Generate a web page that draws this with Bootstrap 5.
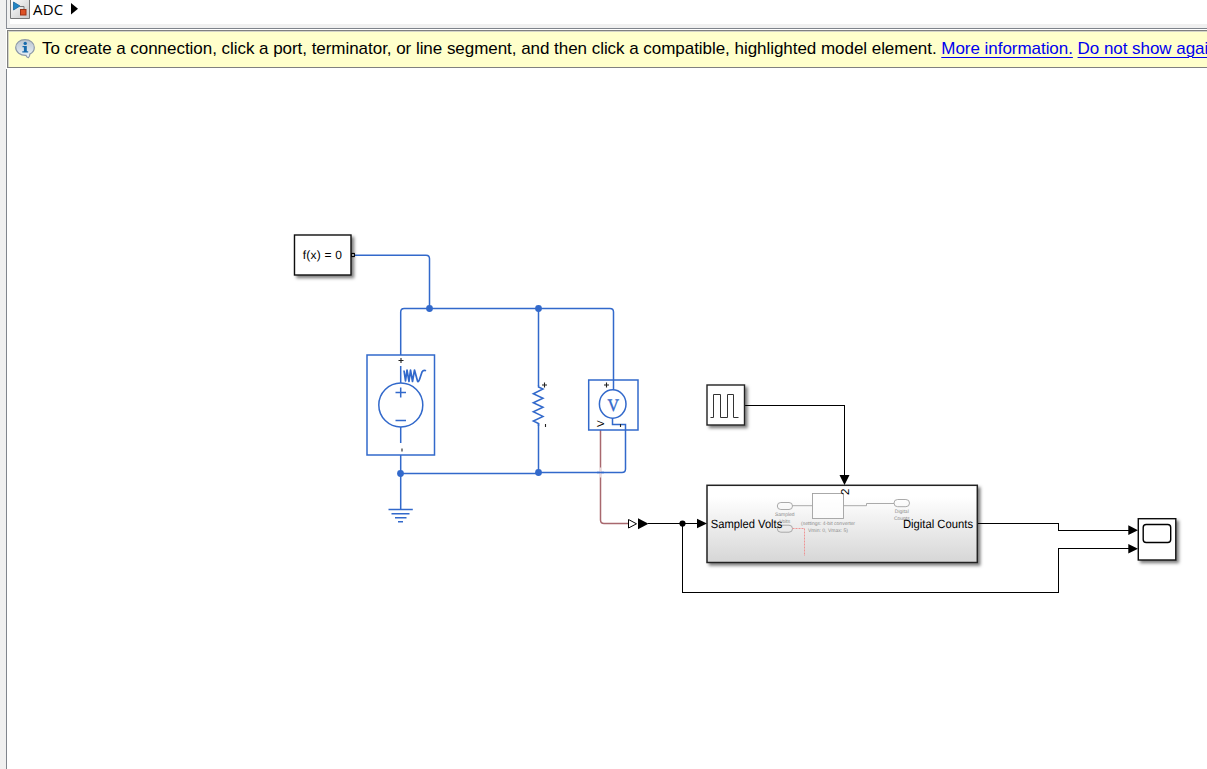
<!DOCTYPE html>
<html lang="en">
<head>
<meta charset="utf-8">
<title>ADC</title>
<meta name="viewport" content="width=device-width, initial-scale=1">
<link href="https://cdn.jsdelivr.net/npm/bootstrap@5.3.0/dist/css/bootstrap.min.css" rel="stylesheet">
<style>
body{background:#fff;font-family:"Liberation Sans",Arial,sans-serif;color:#000}
.gutter{width:6px;background:#f0f0f0}
.crumbs{height:29px;border-left:1px solid #8a8e96;border-bottom:1px solid #7e838b;background:#f0f0f0;padding-left:3px}
.crumbs-in{height:24px;background:#fff;font:15px/18px "Open Sans","Noto Sans",sans-serif}
.crumbs-in span{margin-left:3px;width:31px;letter-spacing:.15px}
.tip{height:38px;margin:1px 0 1px 1px;border:solid #808080;border-width:1px 0 1px 1px;background:#ffffcb;box-shadow:inset 1px 1px #d4d4c8;font-size:17px;letter-spacing:-.041px;line-height:36px;padding-left:7px}
.tip a{color:#00e;text-decoration:underline;text-decoration-thickness:1px;text-underline-offset:3px}
.tip-text{margin-left:7px}
.model{height:700px;border-left:1px solid #80858d}
.model svg text{font-family:"Liberation Sans",Arial,sans-serif;text-rendering:geometricPrecision}
</style>
</head>
<body class="vh-100 overflow-hidden">
<div class="d-flex vh-100 overflow-hidden">
  <div class="gutter flex-shrink-0"></div>
  <main class="flex-grow-1 overflow-hidden">
    <nav class="crumbs">
      <div class="crumbs-in d-flex align-items-start">
        <svg width="20" height="19" viewBox="0 0 20 19">
          <defs><linearGradient id="ig" x2="1" y2="1"><stop stop-color="#fff"/><stop offset="1" stop-color="#c8c8c8"/></linearGradient></defs>
          <path d="M.5-1V18.500H19.500V-1Z" fill="url(#ig)" stroke="#777"/>
          <path d="M10 6.500h4V10" fill="none" stroke="#777"/>
          <path d="M3.500 2 10 6 3.500 10Z" fill="#2286c4" stroke="#1765a0" stroke-width=".8"/>
          <rect x="10.500" y="9.500" width="5.500" height="5.500" fill="#dd5125" stroke="#9c3014"/>
        </svg>
        <span>ADC</span>
        <svg class="ms-1" width="12" height="17" viewBox="0 0 12 17"><path d="M3 3V14.500L10 8.700Z"/></svg>
      </div>
    </nav>
    <div class="tip d-flex align-items-center text-nowrap overflow-hidden" role="status">
      <svg class="flex-shrink-0" width="20" height="20" viewBox="0 0 20 20">
        <defs><linearGradient id="bg" x2="0" y2="1"><stop stop-color="#b9c4d0"/><stop offset="1" stop-color="#eef6fc"/></linearGradient></defs>
        <path d="M10 .700c5.200 0 9.300 3.300 9.300 7.800 0 3-1.800 5.300-4.500 6.600.1 1.300-.5 2.900-1.500 3.600-1-.3-2-1.200-2.300-2.400C5.300 16.500.7 13 .7 8.500S4.800.7 10 .7Z" fill="url(#bg)" stroke="#8d99a7" stroke-width="1.200"/>
        <circle cx="10.200" cy="4.400" r="1.700" fill="#176aac"/>
        <path d="M7.500 6.900h4.300v5.400h1.400v1.300H7.300v-1.300h1.600V8.200H7.500Z" fill="#176aac"/>
      </svg>
      <div class="tip-text"><span>To create a connection, click a port, terminator, or line segment, and then click a compatible, highlighted model element.</span> <a href="#">More information.</a> <a href="#">Do not show again</a></div>
    </div>
    <div class="model">
      <svg class="d-block" width="1200" height="700" viewBox="7 69 1200 700">
        <defs>
          <linearGradient id="sub" x2="0" y2="1"><stop offset=".15" stop-color="#fff"/><stop offset="1" stop-color="#d6d6d6"/></linearGradient>
          <filter id="sh" x="-20%" y="-20%" width="150%" height="150%"><feDropShadow dx="2.500" dy="2.500" stdDeviation="1.500" flood-opacity=".5"/></filter>
        </defs>

        <!-- physical network wires -->
        <g fill="none" stroke="#3269cb" stroke-width="1.500">
          <path d="M354 255.300H426q3.500 0 3.500 3.500V308.500"/>
          <path d="M400.700 355V312q0-3.500 3.500-3.500H610q3.500 0 3.500 3.500V390"/>
          <path d="M538.500 308.500V386M538.500 423V472.500"/>
          <path d="M400.700 455V509.500M400.700 473.500H538.500V472.500H622q3.500 0 3.500-3.500V424.500H612.500V418"/>
        </g>
        <path d="M600.500 430V520q0 3.500 3.500 3.500H628" fill="none" stroke="#a8686e" stroke-width="1.500"/>
        <path d="M600.500 467.500V477.500" stroke="#fff" stroke-width="1.500" opacity=".75"/>
        <path d="M597 472.500H604" stroke="#3269cb" stroke-width="1.500"/>
        <g fill="#3269cb"><circle cx="429.500" cy="308.500" r="3.400"/><circle cx="538.500" cy="308.500" r="3.400"/><circle cx="400.500" cy="473.500" r="3.400"/><circle cx="538.500" cy="472.500" r="3.400"/></g>

        <!-- solver configuration -->
        <rect x="294.500" y="235" width="56.500" height="40" fill="#fff" stroke="#111" stroke-width="1.400" filter="url(#sh)"/>
        <rect x="351.700" y="253.500" width="2.600" height="3" fill="#fff" stroke="#000" stroke-width="1.200"/>
        <text x="302.700" y="259" font-size="12" textLength="39.300">f(x) = 0</text>

        <!-- voltage source -->
        <g fill="none" stroke="#3269cb" stroke-width="1.500">
          <rect x="367" y="355" width="67.500" height="100"/>
          <circle cx="400.800" cy="405" r="22"/>
          <path d="M400.700 366V383M400.700 427V443M395.500 392.500H406M400.700 387.500V397.500M395.500 420.500H406"/>
          <path d="M404 370.500L405.500 381 407 370 409 381.500 410.500 370 412.500 381.500 414.500 370 417.500 381 Q418.500 383 420 378 L422 372 Q423.500 369.500 426 370.800" stroke-width="1.700" stroke-linejoin="round"/>
        </g>
        <path d="M398.500 360.500H403.500M401 358V363" stroke="#222" stroke-width="1.100"/>
        <path d="M402 448.500V451.500" stroke="#333" stroke-width="1.200"/>

        <!-- ground -->
        <path d="M388.500 509.500H412.800M391.500 513.700H409.500M395 517.800H406.500M398 521.800H403" stroke="#3269cb" stroke-width="1.500"/>

        <!-- resistor -->
        <path d="M538.500 385.500V387L543 389 533.300 393.800 543 398.300 533.300 402.800 543 407.300 533.300 411.800 543 416.400 533.300 421 538.500 423.500V426" fill="none" stroke="#3269cb" stroke-width="1.500"/>
        <path d="M542 385H547M544.500 382.500V387.500M545.500 424V427" stroke="#222" stroke-width="1.100"/>

        <!-- voltage sensor -->
        <g fill="none" stroke="#3269cb" stroke-width="1.500">
          <rect x="588.700" y="380" width="49.300" height="50"/>
          <ellipse cx="612.700" cy="404" rx="13.300" ry="14.200"/>
        </g>
        <text x="613.200" y="410.500" font-size="17.500" text-anchor="middle" fill="#3269cb" stroke="#3269cb" stroke-width=".4" textLength="11.500" lengthAdjust="spacingAndGlyphs" style="font-family:'Liberation Serif',serif">V</text>
        <path d="M604 385H609M606.500 382.500V387.500M620.500 424V427" stroke="#222" stroke-width="1.100"/>
        <text transform="translate(604.300 427) rotate(-90)" font-size="10">V</text>

        <!-- converter -->
        <path d="M628.500 519.500V528L636.500 523.800Z" fill="#fff" stroke="#000"/>
        <path d="M638 518.300V529.200L648.500 523.700Z"/>

        <!-- signal lines -->
        <g fill="none" stroke="#000" stroke-width="1" shape-rendering="crispEdges">
          <path d="M648 523.500H698M682.500 523.500V592.500H1058.500V548.500H1130"/>
          <path d="M745 405.500H844.500V477M978 523.500H1058.500V530.500H1130"/>
        </g>
        <circle cx="682.500" cy="523.500" r="3.100"/>

        <!-- pulse generator -->
        <rect x="707" y="385" width="37.500" height="40" fill="#fff" stroke="#222" stroke-width="1.400" filter="url(#sh)"/>
        <path d="M710.500 417.500H713.500V394.500H720.500V417.500H727.500V394.500H733.500V417.500H738.500" fill="none" stroke="#333"/>

        <!-- ADC subsystem -->
        <rect x="707" y="485.300" width="270.300" height="77.200" fill="url(#sub)" stroke="#222" stroke-width="1.500" filter="url(#sh)"/>
        <g fill="none" stroke="#a0a0a0" stroke-width=".9">
          <rect x="777.300" y="502.500" width="15.200" height="7" rx="3.500"/>
          <rect x="777.300" y="525.200" width="15.200" height="7" rx="3.500"/>
          <rect x="894" y="499.500" width="15.500" height="7.200" rx="3.600"/>
          <path d="M792.500 505.700H812.500M843.500 505.700H866.500V503.500H894"/>
          <rect x="812.500" y="493.500" width="31" height="25" fill="#fff" fill-opacity=".6"/>
          <path d="M792.500 528.500H804.500V556" stroke="#ee8b8b" stroke-dasharray="2 1"/>
        </g>
        <g font-size="5" fill="#8c8c8c" text-anchor="middle">
          <text x="784.800" y="516" textLength="19.500">Sampled</text>
          <text x="784.800" y="523">Volts</text>
          <text x="828" y="525.200" textLength="54">(settings: 4-bit converter</text>
          <text x="828" y="532.200" textLength="40">Vmin: 0, Vmax: 5)</text>
          <text x="901.800" y="513">Digital</text>
          <text x="901.800" y="520">Counts</text>
        </g>
        <text x="710.800" y="528" font-size="12" textLength="71.500" lengthAdjust="spacingAndGlyphs">Sampled Volts</text>
        <text x="903" y="528" font-size="12" textLength="70" lengthAdjust="spacingAndGlyphs">Digital Counts</text>
        <text transform="translate(849 495) rotate(-90)" font-size="11.500">2</text>

        <!-- scope -->
        <rect x="1138.300" y="518.700" width="37.500" height="41.300" fill="#fff" stroke="#111" stroke-width="1.400" filter="url(#sh)"/>
        <rect x="1143.200" y="524.500" width="27.500" height="18" rx="3" fill="#fff" stroke="#000" stroke-width="1.400"/>

        <!-- arrowheads -->
        <path d="M697 518.800V528.300L707 523.500ZM839.500 475H849.500L844.500 485ZM1128.300 525.300V535L1138 530.200ZM1128.300 543.900V553.600L1138 548.700Z"/>
      </svg>
    </div>
  </main>
</div>
<script src="https://cdn.jsdelivr.net/npm/bootstrap@5.3.0/dist/js/bootstrap.bundle.min.js"></script>
</body>
</html>
